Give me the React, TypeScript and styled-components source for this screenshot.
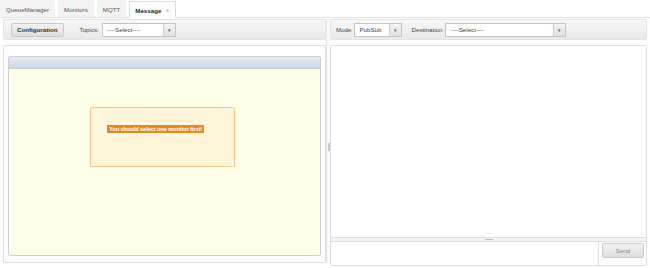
import styled, { createGlobalStyle } from 'styled-components';

const GlobalStyle = createGlobalStyle`
  html, body {
    margin: 0;
    padding: 0;
    background: #ffffff;
    font-family: "Liberation Sans", Arial, sans-serif;
  }
`;

const Page = styled.div`
  width: 650px;
  height: 268px;
  display: flex;
  flex-direction: column;
  box-sizing: border-box;
  overflow: hidden;
`;

const TabBar = styled.div`
  height: 18px;
  display: flex;
  align-items: flex-end;
  gap: 3px;
  border-bottom: 1px solid #e2e2e2;
  box-sizing: border-box;
`;

const Tab = styled.div<{ $active?: boolean }>`
  height: 17px;
  padding: 0 5px;
  display: flex;
  align-items: center;
  gap: 4px;
  font-size: 6.2px;
  color: ${(p) => (p.$active ? '#222' : '#555')};
  font-weight: ${(p) => (p.$active ? 'bold' : 'normal')};
  background: ${(p) => (p.$active ? '#ffffff' : '#f3f3f3')};
  border: 1px solid ${(p) => (p.$active ? '#dcdcdc' : '#f3f3f3')};
  border-bottom: none;
  margin-bottom: ${(p) => (p.$active ? '-1px' : '0')};
  box-sizing: border-box;
`;

const Close = styled.span`
  color: #aaa;
  font-weight: normal;
  font-size: 7px;
`;

const Main = styled.div`
  flex: 1;
  display: flex;
  padding: 1px 3px 5px 3px;
  box-sizing: border-box;
`;

const Column = styled.div<{ $width?: number }>`
  display: flex;
  flex-direction: column;
  gap: 5px;
  ${(p) => (p.$width ? `width: ${p.$width}px;` : 'flex: 1;')}
  min-width: 0;
`;

const Toolbar = styled.div<{ $pad: number }>`
  height: 21px;
  display: flex;
  align-items: center;
  padding: 0 ${(p) => p.$pad}px;
  gap: 2px;
  background: linear-gradient(#f7f7f7, #e9e9e9);
  border: 1px solid #e4e4e4;
  border-radius: 2px;
  box-sizing: border-box;
  font-size: 6.2px;
  color: #444;
`;

const Button = styled.div<{ $bold?: boolean }>`
  height: 14px;
  padding: 0 5px;
  display: flex;
  align-items: center;
  justify-content: center;
  font-size: 6.2px;
  font-weight: ${(p) => (p.$bold ? 'bold' : 'normal')};
  color: ${(p) => (p.$bold ? '#333' : '#888')};
  background: linear-gradient(#f2f2f2, #dedede);
  border: 1px solid #c9c9c9;
  border-radius: 2px;
  box-sizing: border-box;
`;

const Label = styled.span<{ $left?: number }>`
  margin-left: ${(p) => p.$left ?? 0}px;
  margin-right: 1px;
`;

const Select = styled.div<{ $width: number }>`
  width: ${(p) => p.$width}px;
  height: 14px;
  display: flex;
  border: 1px solid #c4c4c4;
  background: #fff;
  box-sizing: border-box;
`;

const SelectText = styled.div`
  flex: 1;
  display: flex;
  align-items: center;
  padding-left: 4px;
  font-size: 6.2px;
  color: #444;
`;

const Arrow = styled.div`
  width: 11px;
  display: flex;
  align-items: center;
  justify-content: center;
  background: linear-gradient(#f3f3f3, #e0e0e0);
  border-left: 1px solid #cfcfcf;
  font-size: 5px;
  color: #555;
`;

const Panel = styled.div`
  flex: 1;
  border: 1px solid #dedede;
  border-radius: 2px;
  padding: 10px 4px 6px 4px;
  display: flex;
  box-sizing: border-box;
  background: #fff;
`;

const Grid = styled.div`
  flex: 1;
  display: flex;
  flex-direction: column;
  border: 1px solid #cfcfcf;
  border-radius: 2px;
  background: #fffee9;
  overflow: hidden;
`;

const GridHeader = styled.div`
  height: 11px;
  background: linear-gradient(#e6edf5, #c8d6e5);
  border-bottom: 1px solid #c5d0dc;
`;

const GridBody = styled.div`
  flex: 1;
  padding-top: 38px;
  padding-left: 81px;
`;

const Notice = styled.div`
  width: 145px;
  height: 60px;
  box-sizing: border-box;
  background: #fff6d9;
  border: 1px solid #f0c98a;
  border-radius: 2px;
  padding: 17px 0 0 16px;
`;

const Badge = styled.div`
  width: fit-content;
  background: #e68a1f;
  color: #fff;
  font-size: 5.7px;
  font-weight: bold;
  padding: 1px 2px;
  line-height: 6px;
  letter-spacing: -0.1px;
  white-space: nowrap;
`;

const VSplitter = styled.div`
  width: 3px;
  display: flex;
  align-items: center;
  justify-content: center;
  background: #fafafa;
  border-left: 1px solid #e6e6e6;
`;

const VHandle = styled.div`
  width: 2px;
  height: 8px;
  background: #c8c8c8;
  margin-top: 12px;
`;

const RightStack = styled.div`
  flex: 1;
  display: flex;
  flex-direction: column;
  border: 1px solid #dedede;
  border-radius: 2px;
  background: #fff;
  margin-bottom: -3px;
  min-height: 0;
`;

const Output = styled.div`
  flex: 1;
  background: #fff;
`;

const HSplitter = styled.div`
  height: 3px;
  display: flex;
  align-items: center;
  justify-content: center;
  background: #f4f4f4;
  border-top: 1px solid #dedede;
  border-bottom: 1px solid #dedede;
`;

const HHandle = styled.div`
  width: 8px;
  height: 1px;
  background: #b8b8b8;
`;

const Composer = styled.div`
  height: 23px;
  display: flex;
  align-items: flex-start;
  gap: 3px;
`;

const Input = styled.div`
  flex: 1;
  height: 100%;
  border-right: 1px solid #dedede;
`;

const SendButton = styled(Button)`
  width: 42px;
  height: 15px;
  margin-top: 1px;
  margin-right: 2px;
`;

export default function App() {
  return (
    <Page>
      <GlobalStyle />
      <TabBar>
        <Tab>QueueManager</Tab>
        <Tab>Monitors</Tab>
        <Tab>MQTT</Tab>
        <Tab $active>
          Message <Close>×</Close>
        </Tab>
      </TabBar>
      <Main>
        <Column $width={323}>
          <Toolbar $pad={7}>
            <Button $bold>Configuration</Button>
            <Label $left={14}>Topics:</Label>
            <Select $width={74}>
              <SelectText>----Select----</SelectText>
              <Arrow>▾</Arrow>
            </Select>
          </Toolbar>
          <Panel>
            <Grid>
              <GridHeader />
              <GridBody>
                <Notice>
                  <Badge>You should select one monitor first!</Badge>
                </Notice>
              </GridBody>
            </Grid>
          </Panel>
        </Column>
        <VSplitter>
          <VHandle />
        </VSplitter>
        <Column>
          <Toolbar $pad={5}>
            <Label>Mode</Label>
            <Select $width={48}>
              <SelectText>PubSub</SelectText>
              <Arrow>▾</Arrow>
            </Select>
            <Label $left={7}>Destination</Label>
            <Select $width={121}>
              <SelectText>----Select----</SelectText>
              <Arrow>▾</Arrow>
            </Select>
          </Toolbar>
          <RightStack>
            <Output />
            <HSplitter>
              <HHandle />
            </HSplitter>
            <Composer>
              <Input />
              <SendButton>Send</SendButton>
            </Composer>
          </RightStack>
        </Column>
      </Main>
    </Page>
  );
}
